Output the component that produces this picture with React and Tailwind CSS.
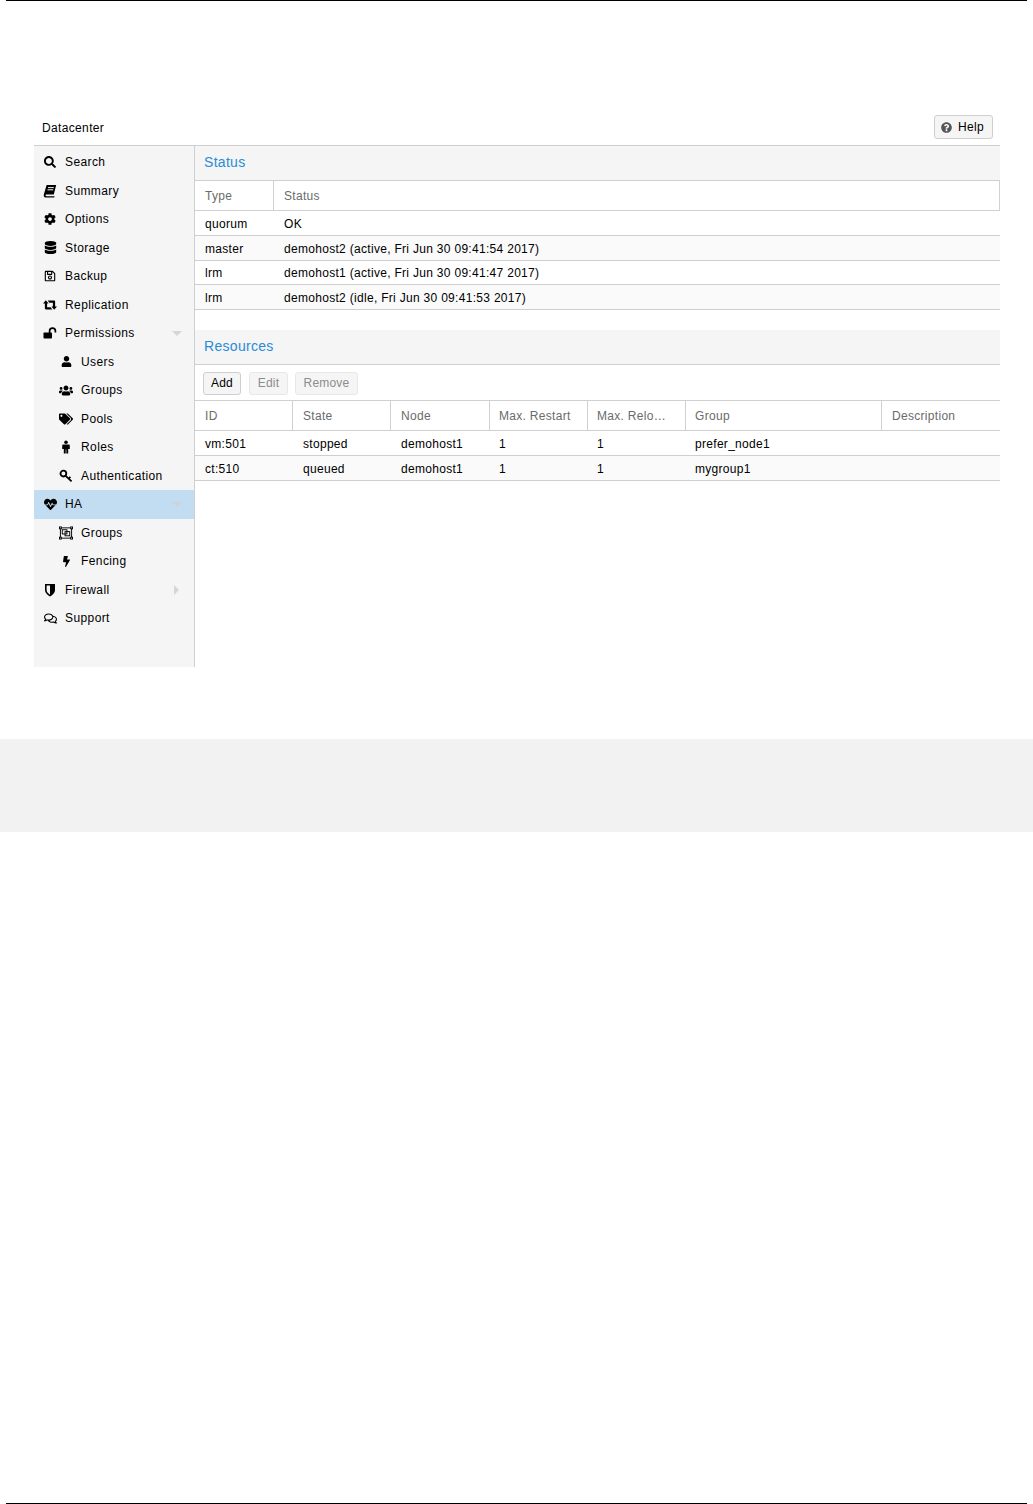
import { FaSearch, FaCog, FaDatabase, FaRegSave, FaUser, FaUsers, FaTags, FaHeartbeat, FaBolt, FaRegComments, FaQuestionCircle } from 'react-icons/fa';

// font awesome 4 shapes that the newer set in react-icons no longer has
const BookIcon = () => (
  <svg width="14" height="14" viewBox="0 0 14 14">
    <path d="M3.6 1 H13.2 L10.8 10.6 H3.4 C2.2 10.6 2.2 12.2 3.4 12.2 H11.6 L11.2 13.4 H2.6 C1 13.4 .4 11.8 .9 10.2 Z" fill="#000" />
    <path d="M5 3.6 H10.8 M4.5 5.8 H10.2" stroke="#f5f5f5" strokeWidth="1" />
  </svg>
);

const RetweetIcon = () => (
  <svg width="14" height="12" viewBox="0 0 15 12">
    <path d="M0 4.5 L3 1 L6 4.5 H4.4 V8.4 H8.2 L10 10.8 H3.2 C2.4 10.8 2 10.4 2 9.6 V4.5 Z" fill="#000" />
    <path d="M15 7.5 L12 11 L9 7.5 H10.6 V3.6 H6.8 L5 1.2 H11.8 C12.6 1.2 13 1.6 13 2.4 V7.5 Z" fill="#000" />
  </svg>
);

const UnlockIcon = () => (
  <svg width="14" height="14" viewBox="0 0 14 14">
    <rect x="0.5" y="6.5" width="8.5" height="6" rx="0.8" fill="#000" />
    <path d="M6.6 7 V5 A2.9 2.9 0 0 1 12.4 5 V6.4" fill="none" stroke="#000" strokeWidth="1.7" />
  </svg>
);

const MaleIcon = () => (
  <svg width="10" height="14" viewBox="0 0 10 14">
    <circle cx="5" cy="2.2" r="1.8" fill="#000" />
    <path d="M2.4 4.6 H7.6 C8.4 4.6 8.8 5 8.8 5.8 V9 H7.2 V13.5 H5.3 V9.5 H4.7 V13.5 H2.8 V9 H1.2 V5.8 C1.2 5 1.6 4.6 2.4 4.6 Z" fill="#000" />
  </svg>
);

const KeyIcon = () => (
  <svg width="14" height="14" viewBox="0 0 14 14">
    <circle cx="4.4" cy="4.6" r="2.9" fill="none" stroke="#000" strokeWidth="1.8" />
    <path d="M6.6 6.8 L12.6 12.4 M9.6 9.6 L11.4 7.8" fill="none" stroke="#000" strokeWidth="1.8" />
  </svg>
);

const GroupIcon = () => (
  <svg width="15" height="14" viewBox="0 0 15 14" fill="none" stroke="#000">
    <rect x="1.5" y="1.5" width="12" height="11" />
    <rect x="0.5" y="0.5" width="2" height="2" fill="#f5f5f5" />
    <rect x="12.5" y="0.5" width="2" height="2" fill="#f5f5f5" />
    <rect x="0.5" y="11.5" width="2" height="2" fill="#f5f5f5" />
    <rect x="12.5" y="11.5" width="2" height="2" fill="#f5f5f5" />
    <rect x="3.5" y="3.5" width="5" height="4.5" />
    <rect x="6.5" y="5.5" width="5" height="4.5" />
  </svg>
);

const ShieldIcon = () => (
  <svg width="12" height="14" viewBox="0 0 12 14">
    <path d="M1 1 H11 V7 C11 10 8 12.4 6 13.5 C4 12.4 1 10 1 7 Z" fill="#000" />
    <path d="M6 2.6 H2.6 V7 C2.6 8.9 4.4 10.8 6 11.7 Z" fill="#f5f5f5" />
  </svg>
);

const navItems = [
  { label: 'Search', icon: <FaSearch size={12} /> },
  { label: 'Summary', icon: <BookIcon /> },
  { label: 'Options', icon: <FaCog size={12} /> },
  { label: 'Storage', icon: <FaDatabase size={13} /> },
  { label: 'Backup', icon: <FaRegSave size={12} /> },
  { label: 'Replication', icon: <RetweetIcon /> },
  { label: 'Permissions', icon: <UnlockIcon />, arrow: 'down' },
  { label: 'Users', icon: <FaUser size={11} />, sub: true },
  { label: 'Groups', icon: <FaUsers size={15} />, sub: true },
  { label: 'Pools', icon: <FaTags size={14} />, sub: true },
  { label: 'Roles', icon: <MaleIcon />, sub: true },
  { label: 'Authentication', icon: <KeyIcon />, sub: true },
  { label: 'HA', icon: <FaHeartbeat size={13} />, arrow: 'down', active: true },
  { label: 'Groups', icon: <GroupIcon />, sub: true },
  { label: 'Fencing', icon: <FaBolt size={11} />, sub: true },
  { label: 'Firewall', icon: <ShieldIcon />, arrow: 'right' },
  { label: 'Support', icon: <FaRegComments size={13} /> },
];

const statusRows = [
  ['quorum', 'OK', 'h-[25px]'],
  ['master', 'demohost2 (active, Fri Jun 30 09:41:54 2017)', 'h-[25px]'],
  ['lrm', 'demohost1 (active, Fri Jun 30 09:41:47 2017)', 'h-[24px]'],
  ['lrm', 'demohost2 (idle, Fri Jun 30 09:41:53 2017)', 'h-[25px]'],
];

const resourceCols = [
  { label: 'ID', width: 'w-[98px]', pad: 'pl-[10px]' },
  { label: 'State', width: 'w-[98px]', pad: 'pl-[10px]' },
  { label: 'Node', width: 'w-[99px]', pad: 'pl-[10px]' },
  { label: 'Max. Restart', width: 'w-[98px]', pad: 'pl-[9px]' },
  { label: 'Max. Relo…', width: 'w-[98px]', pad: 'pl-[9px]' },
  { label: 'Group', width: 'w-[196px]', pad: 'pl-[9px]' },
  { label: 'Description', width: 'flex-1', pad: 'pl-[10px]' },
];

const resourceRows = [
  ['vm:501', 'stopped', 'demohost1', '1', '1', 'prefer_node1', ''],
  ['ct:510', 'queued', 'demohost1', '1', '1', 'mygroup1', ''],
];

const NavRow = ({ item }) => (
  <div className={`flex items-center h-[28.5px] ${item.active ? 'bg-[#c2ddf2]' : ''} ${item.sub ? 'pl-[25px]' : 'pl-[9px]'}`}>
    <span className="w-[14px] flex justify-center text-black">{item.icon}</span>
    <span className="ml-[8px] flex-1 text-black tracking-[0.4px]">{item.label}</span>
    {item.arrow === 'down' && (
      <span className={`mr-[12px] w-0 h-0 border-x-[5px] border-x-transparent border-t-[5px] ${item.active ? 'border-t-[#cdd3d8]' : 'border-t-[#d6d6d6]'}`} />
    )}
    {item.arrow === 'right' && (
      <span className="mr-[15px] w-0 h-0 border-y-[5px] border-y-transparent border-l-[5px] border-l-[#d6d6d6]" />
    )}
  </div>
);

const PanelTitle = ({ children }) => (
  <div className="h-[35px] bg-[#f5f5f5] border-b border-[#cfcfcf] pl-[9px] pb-[2px] flex items-center text-[14px] tracking-[0.3px] text-[#2a8bd8]">
    {children}
  </div>
);

const Cell = ({ className = '', children }) => (
  <div className={`pr-[2px] flex items-center overflow-hidden whitespace-nowrap tracking-[0.3px] ${className}`}>{children}</div>
);

const ToolButton = ({ children, disabled, className = '' }) => (
  <button className={`h-[23px] rounded-[3px] border bg-[#f5f5f5] tracking-[0.2px] ${disabled ? 'border-[#e8e8e8] text-[#8c8c8c]' : 'border-[#cfcfcf] text-black'} ${className}`}>
    {children}
  </button>
);

export default function App() {
  return (
    <div className="h-[1504px] flex flex-col bg-white text-[12px] font-['Liberation_Sans',Arial,sans-serif]">
      <div className="h-px mx-[6px] bg-black" />
      <div className="pt-[114px] pl-[34px] pr-[33px]">
        {/* title bar */}
        <div className="h-[31px] flex items-start justify-between pr-[7px] border-b border-[#cfcfcf]">
          <span className="pl-[8px] pt-[4px] text-black tracking-[0.35px]">Datacenter</span>
          <button className="h-[24px] w-[59px] flex items-center pl-[6px] gap-[6px] rounded-[3px] border border-[#cfcfcf] bg-[#f5f5f5] text-black tracking-[0.3px]">
            <FaQuestionCircle className="text-[11px] text-[#555]" />
            Help
          </button>
        </div>

        <div className="h-[521px] flex">
          {/* side tree */}
          <div className="w-[161px] shrink-0 bg-[#f5f5f5] border-r border-[#cfcfcf] pt-[2px]">
            {navItems.map((item, i) => <NavRow key={i} item={item} />)}
          </div>

          <div className="flex-1 min-w-0">
            <PanelTitle>Status</PanelTitle>
            <div className="flex h-[30px] text-[#6b6b6b] border-b border-r border-[#d0d0d0]">
              <Cell className="w-[79px] pl-[10px] border-r border-[#d0d0d0]">Type</Cell>
              <Cell className="flex-1 pl-[10px]">Status</Cell>
            </div>
            {statusRows.map((row, i) => (
              <div key={i} className={`flex ${row[2]} pt-px border-b border-[#cfcfcf] text-black ${i % 2 ? 'bg-[#fafafa]' : 'bg-white'}`}>
                <Cell className="w-[79px] pl-[10px]">{row[0]}</Cell>
                <Cell className="flex-1 pl-[10px]">{row[1]}</Cell>
              </div>
            ))}

            <div className="mt-[20px]">
              <PanelTitle>Resources</PanelTitle>
            </div>
            <div className="h-[36px] flex items-center gap-[8px] pl-[8px]">
              <ToolButton className="w-[38px]">Add</ToolButton>
              <ToolButton disabled className="w-[39px]">Edit</ToolButton>
              <ToolButton disabled className="w-[63px] -ml-px">Remove</ToolButton>
            </div>
            <div className="flex h-[29px] text-[#6b6b6b] border-y border-[#d0d0d0] box-content -mt-px">
              {resourceCols.map((col) => (
                <Cell key={col.label} className={`${col.width} ${col.pad} ${col.width === 'flex-1' ? '' : 'border-r border-[#d0d0d0]'}`}>{col.label}</Cell>
              ))}
            </div>
            {resourceRows.map((row, i) => (
              <div key={i} className={`flex h-[25px] pt-px border-b border-[#cfcfcf] text-black ${i % 2 ? 'bg-[#fafafa]' : 'bg-white'}`}>
                {row.map((val, j) => (
                  <Cell key={j} className={`${resourceCols[j].width} ${resourceCols[j].pad}`}>{val}</Cell>
                ))}
              </div>
            ))}
          </div>
        </div>
      </div>

      <div className="mt-[72px] h-[93px] bg-[#f2f2f2]" />
      <div className="flex-1" />
      <div className="h-px mx-[6px] bg-black" />
    </div>
  );
}
